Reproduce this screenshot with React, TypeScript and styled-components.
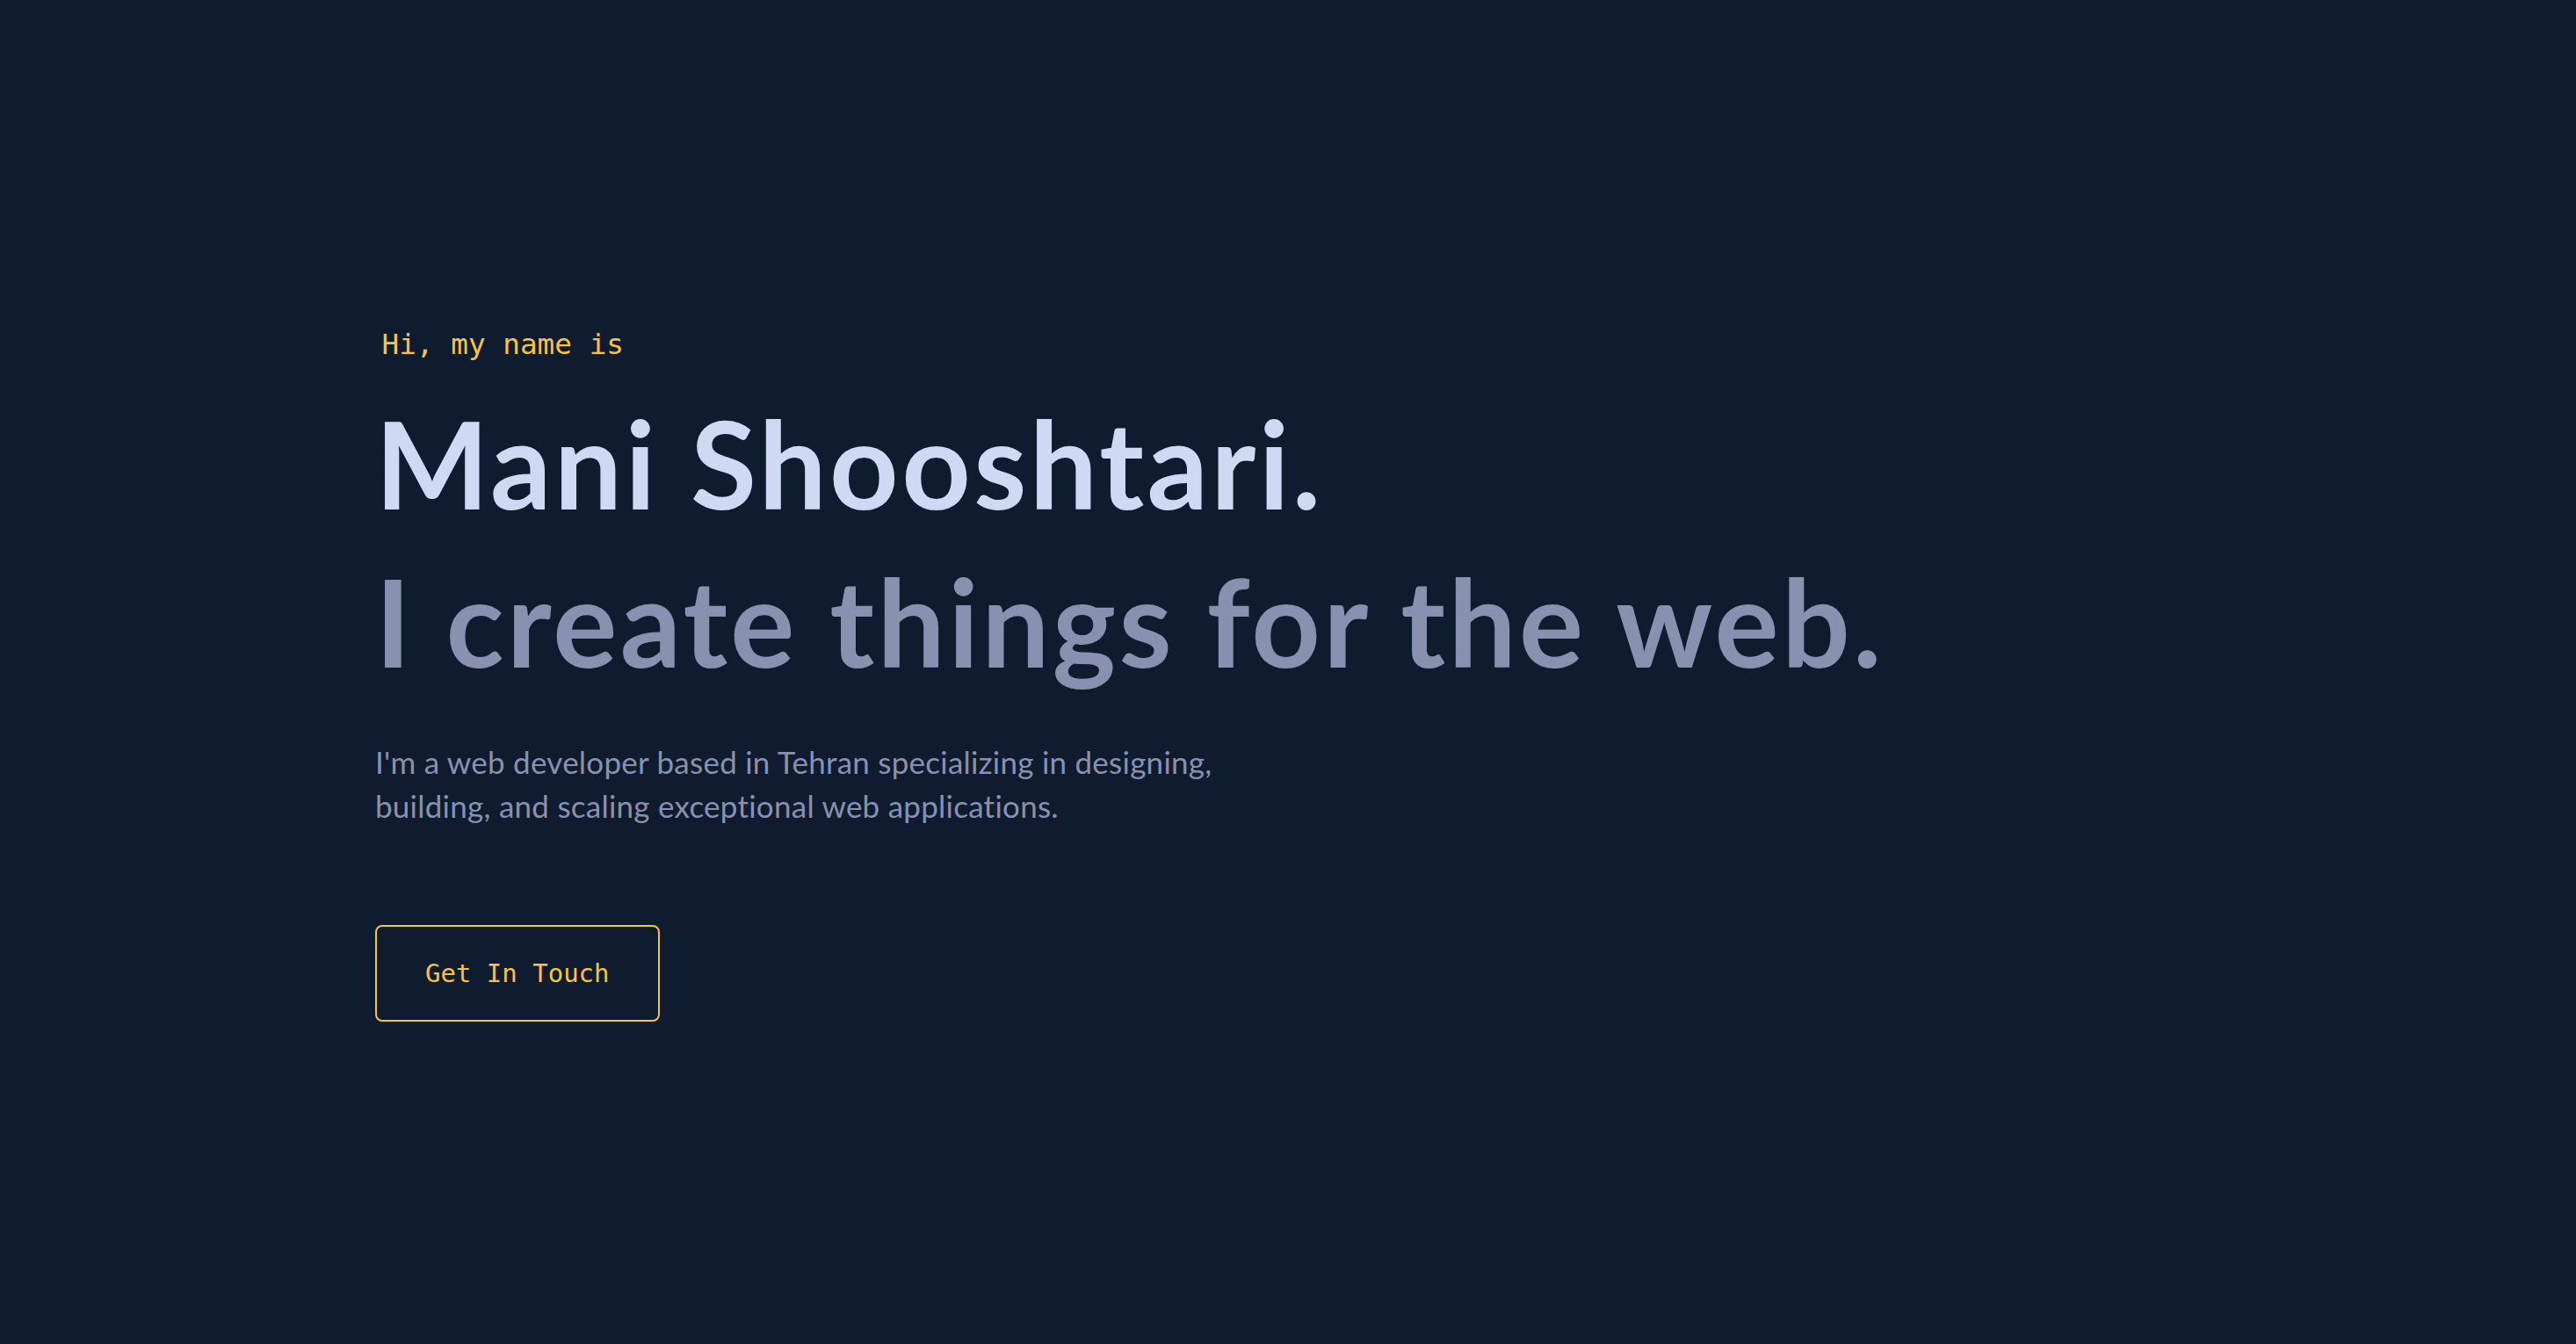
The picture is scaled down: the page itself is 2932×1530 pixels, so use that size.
import React from "react";
import styled, { createGlobalStyle } from "styled-components";

const GlobalStyle = createGlobalStyle`
  html, body {
    margin: 0;
    padding: 0;
    background: #0f1b2e;
  }
  * { box-sizing: border-box; }
`;

const Hero = styled.section`
  min-height: 100vh;
  display: flex;
  flex-direction: column;
  justify-content: center;
  align-items: flex-start;
  padding: 5px 0 0 427px;
  background: #0f1b2e;
`;

const Greeting = styled.p`
  margin: 0 0 25.5px 7.5px;
  font-family: "DejaVu Sans Mono", "Liberation Mono", monospace;
  font-size: 32.7px;
  line-height: 40px;
  font-weight: 400;
  color: #f5c542;
`;

const Headline = styled.h1<{ $tone: "light" | "muted" }>`
  margin: 0;
  font-family: Lato, "Liberation Sans", sans-serif;
  font-weight: 700;
  font-size: 137px;
  line-height: 180px;
  letter-spacing: 3.3px;
  color: ${(p) => (p.$tone === "light" ? "#cfd9f4" : "#8892b0")};
`;

const Intro = styled.p`
  margin: 44.5px 0 0 0;
  max-width: 1010px;
  font-family: Lato, "Liberation Sans", sans-serif;
  font-size: 35px;
  line-height: 50px;
  letter-spacing: 0.25px;
  font-weight: 400;
  color: #8892b0;
`;

const ContactButton = styled.a`
  display: inline-block;
  margin-top: 111.5px;
  padding: 36px 55px;
  border: 2px solid #f5c542;
  border-radius: 8px;
  font-family: "DejaVu Sans Mono", "Liberation Mono", monospace;
  font-size: 29px;
  line-height: 34px;
  color: #f5c542;
  text-decoration: none;
  background: transparent;
  cursor: pointer;
`;

export default function App() {
  return (
    <>
      <GlobalStyle />
      <Hero>
        <Greeting>Hi, my name is</Greeting>
        <Headline $tone="light">Mani Shooshtari.</Headline>
        <Headline as="h2" $tone="muted">
          I create things for the web.
        </Headline>
        <Intro>
          I'm a web developer based in Tehran specializing in designing,
          building, and scaling exceptional web applications.
        </Intro>
        <ContactButton href="#contact">Get In Touch</ContactButton>
      </Hero>
    </>
  );
}
